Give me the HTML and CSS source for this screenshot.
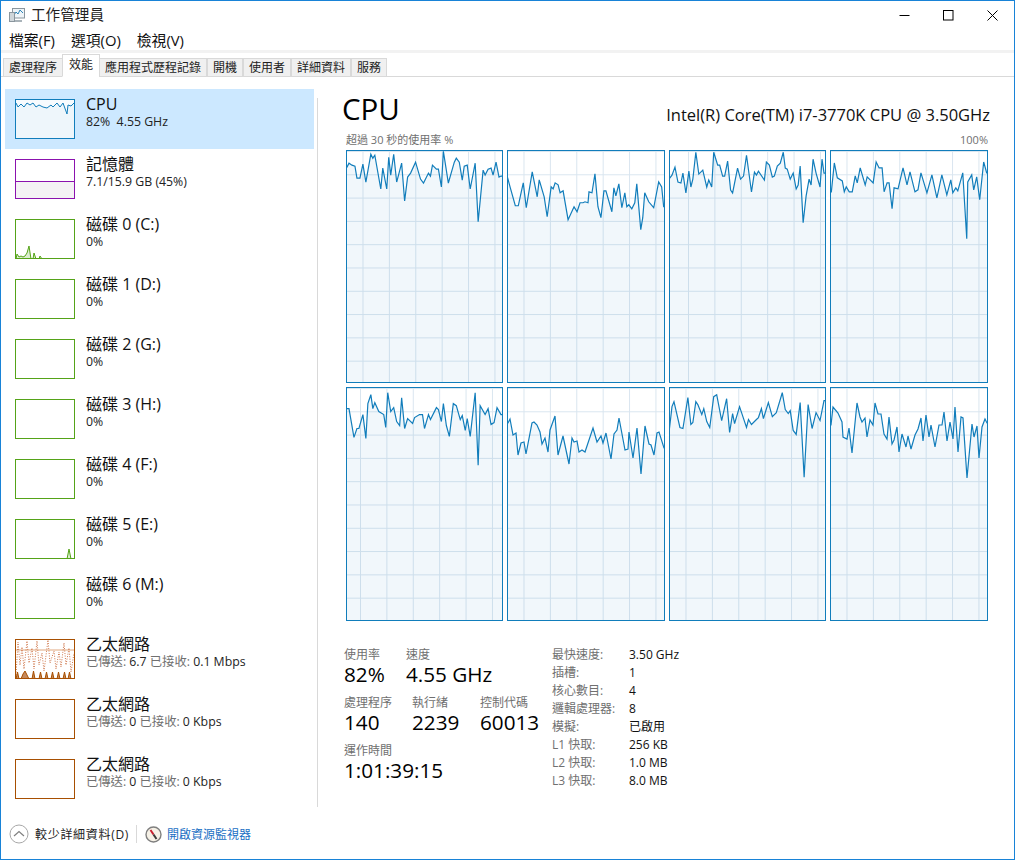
FILE: index.html
```html
<!DOCTYPE html>
<html lang="zh-Hant">
<head>
    <meta charset="UTF-8">
    <title>工作管理員</title>
    <link rel="stylesheet" href="styles.css">
</head>
<body>
    <div class="window">
        <div class="titlebar">
            <svg class="app-icon" width="16" height="16" viewBox="0 0 16 16">
                <rect x="3.5" y="1.5" width="12" height="9.5" fill="#eef4f8" stroke="#8a969e"/>
                <polyline points="5,8 7,5 9,7 11,3 14,6" fill="none" stroke="#2f86b8"/>
                <rect x="0.5" y="5.5" width="5" height="9" fill="#cfd6da" stroke="#8a969e"/>
                <rect x="6" y="13" width="7" height="2" fill="#a9b3b9"/>
            </svg>
            <span class="app-title">工作管理員</span>
            <div class="controls">
                <div class="control"><svg width="11" height="11" viewBox="0 0 11 11"><line x1="0.5" y1="5.5" x2="10.5" y2="5.5" stroke="#000"/></svg></div>
                <div class="control"><svg width="11" height="11" viewBox="0 0 11 11"><rect x="0.5" y="0.5" width="9.5" height="9.5" fill="none" stroke="#000"/></svg></div>
                <div class="control"><svg width="11" height="11" viewBox="0 0 11 11"><path d="M0.5 0.5 L10.5 10.5 M10.5 0.5 L0.5 10.5" fill="none" stroke="#000"/></svg></div>
            </div>
        </div>

        <div class="menubar">
            <span class="menu-item">檔案(F)</span>
            <span class="menu-item">選項(O)</span>
            <span class="menu-item">檢視(V)</span>
        </div>

        <div class="tabs">
            <div class="tab">處理程序</div>
            <div class="tab active">效能</div>
            <div class="tab">應用程式歷程記錄</div>
            <div class="tab">開機</div>
            <div class="tab">使用者</div>
            <div class="tab">詳細資料</div>
            <div class="tab">服務</div>
        </div>

        <div class="main">
            <div class="sidebar">
                <div class="item selected">
                    <svg class="thumb thumb-cpu" viewBox="1 1 58 38">
                        <polygon points="-5,4 1,4 3,8 6,5 9,8 12,4 15,6 18,4 21,8 24,6 28,8 32,9 36,6 38,8 42,4 45,8 48,4 52,15 53,6 56,7 59,4 65,4 65,45 -5,45"/>
                    </svg>
                    <div class="item-text">
                        <div class="item-title">CPU</div>
                        <div class="item-sub">82%&nbsp; 4.55 GHz</div>
                    </div>
                </div>
                <div class="item">
                    <div class="thumb thumb-mem"><div class="mem-used"></div></div>
                    <div class="item-text">
                        <div class="item-title">記憶體</div>
                        <div class="item-sub">7.1/15.9 GB (45%)</div>
                    </div>
                </div>
                <div class="item">
                    <svg class="thumb thumb-disk" viewBox="1 1 58 38">
                        <polygon points="1,40 2,35 4,38 6,37 8,38 10,37 12,34 14,27 16,40 18,40 19,34 21,40 24,40 25,37 27,40"/>
                    </svg>
                    <div class="item-text">
                        <div class="item-title">磁碟 0 (C:)</div>
                        <div class="item-sub">0%</div>
                    </div>
                </div>
                <div class="item">
                    <div class="thumb thumb-disk"></div>
                    <div class="item-text">
                        <div class="item-title">磁碟 1 (D:)</div>
                        <div class="item-sub">0%</div>
                    </div>
                </div>
                <div class="item">
                    <div class="thumb thumb-disk"></div>
                    <div class="item-text">
                        <div class="item-title">磁碟 2 (G:)</div>
                        <div class="item-sub">0%</div>
                    </div>
                </div>
                <div class="item">
                    <div class="thumb thumb-disk"></div>
                    <div class="item-text">
                        <div class="item-title">磁碟 3 (H:)</div>
                        <div class="item-sub">0%</div>
                    </div>
                </div>
                <div class="item">
                    <div class="thumb thumb-disk"></div>
                    <div class="item-text">
                        <div class="item-title">磁碟 4 (F:)</div>
                        <div class="item-sub">0%</div>
                    </div>
                </div>
                <div class="item">
                    <svg class="thumb thumb-disk" viewBox="1 1 58 38">
                        <polygon points="52,40 54,30 56,40"/>
                    </svg>
                    <div class="item-text">
                        <div class="item-title">磁碟 5 (E:)</div>
                        <div class="item-sub">0%</div>
                    </div>
                </div>
                <div class="item">
                    <div class="thumb thumb-disk"></div>
                    <div class="item-text">
                        <div class="item-title">磁碟 6 (M:)</div>
                        <div class="item-sub">0%</div>
                    </div>
                </div>
                <div class="item">
                    <svg class="thumb thumb-net" viewBox="1 1 58 38">
                        <line class="net-base" x1="1" y1="11" x2="59" y2="11"/>
                        <polyline class="net-recv" points="1,36 3,3 5,26 7,8 9,30 12,2 14,24 17,9 19,30 22,2 24,26 27,14 29,32 33,1 35,24 39,12 41,30 44,13 46,28 49,4 51,26 54,9 56,33 59,14"/>
                        <polygon class="net-send" points="1,40 2.5,33 4,40 6,40 8,35 10,32 12,36 14,40 17,40 18.5,32 20,40 24,40 25.5,33 27,40 30,40 31.5,33 33,40 36,40 37.5,33 39,40 42,40 43.5,33 45,40 48,40 49.5,33 51,40 53,40 54.5,33 56,40"/>
                    </svg>
                    <div class="item-text">
                        <div class="item-title">乙太網路</div>
                        <div class="item-sub"><span class="muted">已傳送:</span> 6.7 <span class="muted">已接收:</span> 0.1 Mbps</div>
                    </div>
                </div>
                <div class="item">
                    <div class="thumb thumb-net"></div>
                    <div class="item-text">
                        <div class="item-title">乙太網路</div>
                        <div class="item-sub"><span class="muted">已傳送:</span> 0 <span class="muted">已接收:</span> 0 Kbps</div>
                    </div>
                </div>
                <div class="item">
                    <div class="thumb thumb-net"></div>
                    <div class="item-text">
                        <div class="item-title">乙太網路</div>
                        <div class="item-sub"><span class="muted">已傳送:</span> 0 <span class="muted">已接收:</span> 0 Kbps</div>
                    </div>
                </div>
            </div>

            <div class="divider"></div>

            <div class="pane">
                <div class="pane-header">
                    <h1 class="pane-title">CPU</h1>
                    <div class="cpu-model">Intel(R) Core(TM) i7-3770K CPU @ 3.50GHz</div>
                </div>
                <div class="graph-caption">
                    <span>超過 30 秒的使用率 %</span>
                    <span>100%</span>
                </div>

                <div class="graphs">
                    <svg class="graph" viewBox="1 1 156 232">
                        <polygon points="-5,17 1,17 3,13 6,15 9,16 11,28 14,28 17,14 20,32 25,4 27,8 29,5 35,39 37,18 41,39 43,7 45,25 48,4 51,32 56,13 59,51 62,27 65,23 70,12 75,29 78,33 83,23 85,26 87,15 91,19 93,19 96,37 98,1 103,33 109,12 111,8 114,12 117,30 119,16 122,15 125,39 130,13 133,72 138,20 140,25 143,19 146,18 148,25 151,12 154,27 156,26 165,26 165,240 -5,240"/>
                    </svg>
                    <svg class="graph" viewBox="1 1 156 232">
                        <polygon points="-5,27 0,27 3,38 8,56 11,56 14,42 16,33 19,58 25,22 30,47 32,30 37,47 40,67 44,37 46,39 48,33 51,35 53,43 56,41 61,70 67,57 70,62 73,53 76,53 78,52 81,53 82,42 85,43 88,24 91,57 94,68 97,41 99,41 105,62 107,38 109,46 112,34 115,58 118,43 120,57 122,55 125,59 128,53 130,34 134,80 136,68 138,43 142,52 147,58 152,32 155,37 157,57 165,57 165,240 -5,240"/>
                    </svg>
                    <svg class="graph graph-late" viewBox="1 1 156 232">
                        <polygon points="-5,29 0,29 3,25 6,17 9,32 12,33 14,23 17,43 20,21 22,37 24,29 27,2 30,24 34,20 38,37 40,30 43,37 45,2 49,15 51,15 54,26 56,26 59,11 62,40 64,43 69,18 72,29 75,26 78,5 83,42 86,22 88,25 90,21 96,30 98,12 101,15 104,27 106,26 109,16 112,13 115,2 117,18 119,19 122,29 125,23 128,39 130,35 132,16 135,73 138,46 141,29 143,35 145,9 148,23 152,37 154,9 156,23 165,23 165,240 -5,240"/>
                    </svg>
                    <svg class="graph" viewBox="1 1 156 232">
                        <polygon points="-5,42 1,42 4,13 7,28 12,31 14,42 16,37 19,42 22,42 25,26 27,33 30,18 35,35 37,27 43,33 46,12 49,18 52,18 54,42 57,33 59,33 62,59 64,38 68,39 73,18 77,35 80,22 85,42 88,40 91,23 97,43 102,25 107,48 112,25 117,45 121,30 123,43 126,38 128,41 133,23 137,89 138,32 142,25 144,40 147,27 150,50 154,12 157,23 165,23 165,240 -5,240"/>
                    </svg>
                    <svg class="graph graph-early" viewBox="1 1 156 232">
                        <polygon points="-5,21 1,21 3,21 8,50 11,41 13,41 17,27 20,51 22,16 25,7 27,21 29,15 33,24 38,27 40,40 42,5 45,24 48,20 51,34 54,38 56,10 59,41 62,31 67,36 69,30 74,27 77,27 79,41 83,27 85,32 91,20 93,22 96,34 98,16 101,38 104,49 108,16 111,18 115,32 117,28 120,43 122,31 125,49 130,5 133,78 135,18 140,27 143,21 146,37 149,35 152,20 156,27 165,27 165,240 -5,240"/>
                    </svg>
                    <svg class="graph" viewBox="1 1 156 232">
                        <polygon points="-5,36 1,36 3,32 6,48 9,46 11,68 14,56 17,55 19,67 25,36 27,35 30,38 33,45 35,57 38,51 41,65 43,43 48,29 51,68 56,49 62,77 65,51 67,55 70,54 72,65 75,63 78,65 86,41 90,55 94,49 96,56 99,46 104,72 107,47 110,43 112,31 118,63 121,62 122,45 126,71 130,41 134,87 138,39 142,57 144,58 147,68 150,46 152,45 157,61 165,61 165,240 -5,240"/>
                    </svg>
                    <svg class="graph" viewBox="1 1 156 232">
                        <polygon points="-5,45 0,45 3,19 5,14 11,40 14,41 19,10 22,37 24,35 27,14 29,17 33,27 35,21 38,34 41,40 45,9 48,7 53,33 58,11 61,45 64,26 66,36 71,19 78,40 80,32 83,37 88,32 90,30 93,21 95,31 100,15 104,29 108,25 114,5 117,22 120,26 122,23 125,43 128,47 132,15 136,90 140,17 144,41 148,25 152,33 156,13 165,13 165,240 -5,240"/>
                    </svg>
                    <svg class="graph" viewBox="1 1 156 232">
                        <polygon points="-5,38 1,38 3,20 8,26 12,35 13,50 17,52 19,41 22,66 27,16 30,30 32,35 35,31 37,50 40,33 43,38 45,16 48,27 51,27 54,47 57,52 59,30 62,57 64,53 67,40 69,65 72,47 76,60 78,49 81,62 85,48 88,42 91,31 93,54 96,28 99,50 101,38 105,60 109,38 112,38 114,25 117,54 120,35 123,52 125,20 128,65 131,30 133,31 137,91 142,37 144,50 147,39 149,71 152,40 155,32 157,36 165,36 165,240 -5,240"/>
                    </svg>
                </div>

                <div class="details">
                    <div class="stats">
                        <div class="stat-row">
                            <div class="stat stat-usage">
                                <div class="stat-label">使用率</div>
                                <div class="stat-value">82%</div>
                            </div>
                            <div class="stat">
                                <div class="stat-label">速度</div>
                                <div class="stat-value">4.55 GHz</div>
                            </div>
                        </div>
                        <div class="stat-row">
                            <div class="stat stat-count">
                                <div class="stat-label">處理程序</div>
                                <div class="stat-value">140</div>
                            </div>
                            <div class="stat stat-count">
                                <div class="stat-label">執行緒</div>
                                <div class="stat-value">2239</div>
                            </div>
                            <div class="stat">
                                <div class="stat-label">控制代碼</div>
                                <div class="stat-value">60013</div>
                            </div>
                        </div>
                        <div class="stat-row">
                            <div class="stat">
                                <div class="stat-label">運作時間</div>
                                <div class="stat-value">1:01:39:15</div>
                            </div>
                        </div>
                    </div>
                    <div class="specs">
                        <span class="spec-label">最快速度:</span><span class="spec-value">3.50 GHz</span>
                        <span class="spec-label">插槽:</span><span class="spec-value">1</span>
                        <span class="spec-label">核心數目:</span><span class="spec-value">4</span>
                        <span class="spec-label">邏輯處理器:</span><span class="spec-value">8</span>
                        <span class="spec-label">模擬:</span><span class="spec-value">已啟用</span>
                        <span class="spec-label">L1 快取:</span><span class="spec-value">256 KB</span>
                        <span class="spec-label">L2 快取:</span><span class="spec-value">1.0 MB</span>
                        <span class="spec-label">L3 快取:</span><span class="spec-value">8.0 MB</span>
                    </div>
                </div>
            </div>
        </div>

        <div class="footer">
            <svg width="20" height="20" viewBox="0 0 20 20">
                <circle cx="10" cy="10" r="9" fill="#fff" stroke="#a8a8a8"/>
                <polyline points="5,12 10,7.5 15,12" fill="none" stroke="#808080" stroke-width="1.2"/>
            </svg>
            <span class="less-details">較少詳細資料(D)</span>
            <div class="footer-sep"></div>
            <svg width="17" height="17" viewBox="0 0 17 17">
                <circle cx="8.5" cy="8.5" r="7.5" fill="#f6f1e6" stroke="#7f7f7f" stroke-width="1.4"/>
                <line x1="5.5" y1="4" x2="8.5" y2="8.5" stroke="#c8202f" stroke-width="2"/>
                <line x1="8.5" y1="8.5" x2="11.5" y2="13" stroke="#3a3a3a" stroke-width="2"/>
            </svg>
            <a class="monitor-link">開啟資源監視器</a>
        </div>
    </div>
</body>
</html>
```

FILE: styles.css
```css
:root {
    --cpu-color: #117dbb;
    --mem-color: #8b12ae;
    --disk-color: #55a318;
    --net-color: #a74f01;
    --label-color: #707070;
}

* {
    box-sizing: border-box;
    margin: 0;
    padding: 0;
}

body {
    font-family: 'Open Sans', 'Noto Sans CJK TC', sans-serif;
    color: #000;
    background-color: #fff;
}

.window {
    display: flex;
    flex-direction: column;
    height: 860px;
    border: 1px solid #1883d7;
    overflow: hidden;
}

/* Title bar */
.titlebar {
    display: flex;
    align-items: center;
    height: 28px;
    padding-left: 8px;
    flex-shrink: 0;
}

.app-icon {
    margin-right: 6px;
}

.app-title {
    margin-bottom: 3px;
    font-size: 14.6px;
    color: #222;
}

.controls {
    display: flex;
    margin-left: auto;
}

.control {
    display: flex;
    justify-content: center;
    align-items: center;
    width: 44px;
    height: 28px;
}

/* Menu */
.menubar {
    display: flex;
    gap: 16px;
    height: 21px;
    padding-left: 8px;
    align-items: center;
    flex-shrink: 0;
}

.menu-item {
    font-size: 14.8px;
    color: #111;
}

/* Tabs */
.tabs {
    display: flex;
    align-items: flex-end;
    height: 27px;
    padding-left: 2px;
    border-top: 3px solid #f2f2f2;
    border-bottom: 1px solid #d9d9d9;
    flex-shrink: 0;
}

.tab {
    display: flex;
    align-items: center;
    justify-content: center;
    height: 19px;
    margin-bottom: -1px;
    padding: 0 5px 2px;
    font-size: 12px;
    color: #222;
    background-color: #f0f0f0;
    border: 1px solid #d9d9d9;
}

.tab.active {
    height: 23px;
    margin: 0 -1px -1px;
    padding: 0 6px 4px;
    background-color: #fff;
    border-bottom-color: #fff;
}

/* Main */
.main {
    display: flex;
    flex: 1;
    min-height: 0;
    padding: 12px 0 0 4px;
}

.sidebar {
    width: 309px;
    flex-shrink: 0;
}

.item {
    display: flex;
    height: 60px;
    padding: 10px 0 0 10px;
}

.item.selected {
    background-color: #cce8ff;
}

.thumb {
    display: block;
    width: 60px;
    height: 40px;
    margin-right: 11px;
    flex-shrink: 0;
    border: 1px solid;
    background-color: #fff;
    overflow: hidden;
}

.thumb-cpu {
    border-color: var(--cpu-color);
    background-color: #f7fbfe;
}

.thumb-cpu polygon {
    fill: rgba(17, 125, 187, 0.04);
    stroke: var(--cpu-color);
}

.thumb-mem {
    display: flex;
    flex-direction: column;
    justify-content: flex-end;
    border-color: var(--mem-color);
}

.mem-used {
    height: 17px;
    background-color: #f4f2f4;
    border-top: 1px solid var(--mem-color);
}

.thumb-disk {
    border-color: var(--disk-color);
}

.thumb-disk polygon {
    fill: #dcedd0;
    stroke: var(--disk-color);
}

.thumb-net {
    border-color: var(--net-color);
}

.net-base {
    stroke: #e0a77f;
}

.net-recv {
    fill: none;
    stroke: #d0764a;
    stroke-dasharray: 1 1.5;
}

.net-send {
    fill: #c78a5c;
    stroke: var(--net-color);
}

.item-text {
    margin-top: -5px;
}

.item-title {
    font-size: 16px;
    line-height: 20px;
    color: #111;
}

.item-sub {
    margin-top: -1px;
    font-size: 12.3px;
    line-height: 17px;
    color: #222;
}

.muted {
    color: var(--label-color);
}

.divider {
    width: 1px;
    margin: 9px 0 2px 3px;
    background-color: #d9d9d9;
    flex-shrink: 0;
}

/* Right pane */
.pane {
    flex: 1;
    display: flex;
    flex-direction: column;
    min-width: 0;
    padding-left: 28px;
    padding-right: 26px;
}

.pane-header {
    display: flex;
    justify-content: space-between;
    align-items: flex-end;
    height: 41px;
    margin-left: -4px;
    margin-right: -2px;
}

.pane-title {
    font-size: 29.5px;
    font-weight: 400;
    line-height: 42px;
    color: #000;
}

.cpu-model {
    font-size: 16.5px;
    line-height: 30px;
    color: #111;
}

.graph-caption {
    display: flex;
    justify-content: space-between;
    height: 19px;
    margin-top: 1px;
    font-size: 11px;
    line-height: 18px;
    color: var(--label-color);
}

.graphs {
    display: grid;
    grid-template-columns: 157px 158px 157px 158px;
    grid-template-rows: 233px 234px;
    gap: 4px;
}

.graph {
    display: block;
    width: 100%;
    height: 100%;
    overflow: hidden;
    border: 1px solid var(--cpu-color);
    background-color: #fff;
    background-image:
        linear-gradient(to right, #d9e5ef 1px, transparent 1px),
        linear-gradient(to bottom, #d9e5ef 1px, transparent 1px);
    background-size: 26.4px 23.3px;
    background-position: 15.5px 0;
}

.graph-late {
    background-position: 18px 0;
}

.graph-early {
    background-position: 13px 0;
}

.graph polygon {
    fill: rgba(17, 125, 187, 0.06);
    stroke: var(--cpu-color);
    stroke-width: 1.2;
}

/* Stats under the graphs */
.details {
    display: flex;
    margin: 27px 0 0 -2px;
}

.stats {
    width: 208px;
    flex-shrink: 0;
}

.stat-row {
    display: flex;
    height: 48px;
}

.stat-usage {
    width: 62px;
}

.stat-count {
    width: 68px;
}

.stat-label {
    font-size: 12px;
    line-height: 14px;
    color: var(--label-color);
}

.stat-value {
    font-size: 20.7px;
    line-height: 24px;
    white-space: nowrap;
}

.specs {
    display: grid;
    grid-template-columns: 77px auto;
    grid-auto-rows: 18px;
    justify-content: start;
    margin-top: -2px;
    font-size: 12px;
    line-height: 18px;
}

.spec-label {
    color: var(--label-color);
}

.spec-value {
    color: #111;
}

/* Footer */
.footer {
    display: flex;
    align-items: center;
    height: 50px;
    padding-left: 8px;
    flex-shrink: 0;
}

.less-details {
    margin-left: 6px;
    font-size: 12px;
    letter-spacing: 0.7px;
    color: #222;
}

.footer-sep {
    width: 1px;
    height: 18px;
    margin: 0 8px 0 7px;
    background-color: #d9d9d9;
}

.monitor-link {
    margin-left: 5px;
    font-size: 12px;
    color: #1a6fc4;
}
```
